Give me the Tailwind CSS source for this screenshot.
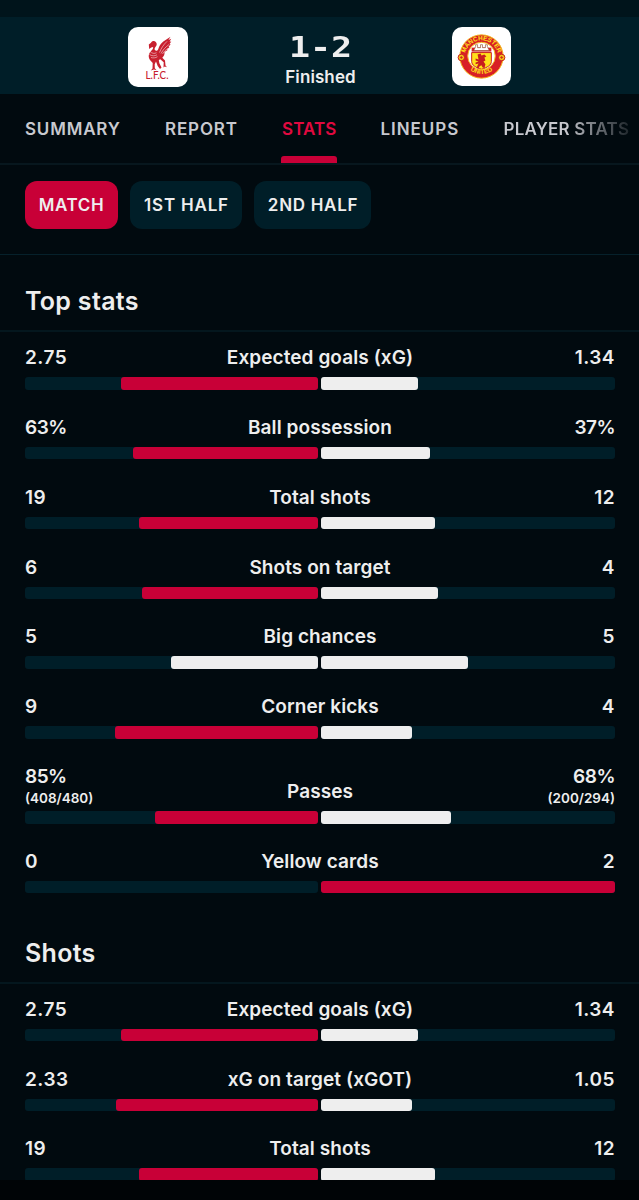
<!DOCTYPE html>
<html lang="en">
<head>
<meta charset="utf-8">
<title>Match stats</title>
<script src="https://cdn.jsdelivr.net/npm/@tailwindcss/browser@4"></script>
</head>
<body class="bg-[#010a0f] font-['Inter',sans-serif] text-[#eeeeee] h-[1200px] overflow-hidden">
<div class="flex h-[1180px] flex-col overflow-hidden">
  <div class="h-[17px] shrink-0 bg-[#00141b]"></div>
  <header class="grid h-[77px] shrink-0 grid-cols-[128px_60px_1fr_60px_127px] items-center bg-[#001e28] pt-[3px]">
    <span></span>
    <div class="-mt-px h-[60px] w-[60px] rounded-[10px] bg-white">
      <svg viewBox="0 0 60 60" class="h-[60px] w-[60px]" fill="#c8202f">
        <path d="M20.800 17.500l2.200-1.800c.8-1.700 3.300-2.200 4.800-.8 1.500 1.500 1 3.400-.2 4.800-1 1.300-1.500 2.600-.5 3.600 1 .9 2.500.3 3-.9 1.200-3.200 2.400-5.800 5.200-7.900l7.200-4.700-2 3.300 2.700-1.300-1.600 3 1.700-.4-1.900 2.900 1.300-.2-2.200 2.900 1 .1-2.500 2.500.6.3-3.100 2.200c.3 2.300-.6 4.300-2.200 5.700l2.700 2.800.5 4.800 1.500 1.800-2.200-.6-1.300 1 .2-5.400-3.400-3-1.500.8.600 3.200 2.100 4.300-1.500 1.600-2.300-3.200-1.700-4.500-1.300 2.800.1 4 1.800 2-2.600-.6-3.200 1 1.700-2.100.2-5.600-2.500-2.600c-2.300-3.300-1.700-6.700.9-9.200 1.200-1.200 2.200-2.300 2-4l-1.900.4-2 1.600z"/>
        <path d="M31.500 25.500c1.700-4 3.600-7.500 7.600-11.200M33 26.500c2-3.600 4-6 8-9M34.500 27c1.500-2.500 3-4 5.500-5.700M22 24.500c2 2 4.500 2.400 6.500 1.200M21.500 27.500c2.500 1.700 5 1.700 7.500.3M23 30.500c2 .7 4.500.5 6.500-.8" fill="none" stroke="#fff" stroke-width=".5"/>
        <text x="29" y="52" text-anchor="middle" font-family="Lato" font-size="12" font-weight="500" textLength="23" lengthAdjust="spacingAndGlyphs">L.F.C.</text>
      </svg>
    </div>
    <div class="flex flex-col items-center pl-px">
      <div class="mt-[6px] flex h-[32px] gap-[4.500px] font-['DejaVu_Sans_Mono',monospace] text-[28px] leading-[32px] font-bold"><span class="scale-x-125">1</span><span class="scale-x-125">-</span><span class="scale-x-125">2</span></div>
      <div class="mt-px text-[17px] leading-6 font-semibold tracking-[0.100px]">Finished</div>
    </div>
    <div class="-mt-px h-[59px] w-[59px] rounded-[10px] bg-white">
      <svg viewBox="0 0 60 60" class="h-[59px] w-[59px]">
        <defs><path id="arcT" d="M13.200 28a17 17 0 0 1 33.600 0"/><path id="arcB" d="M12 37a20.500 20.500 0 0 0 36 0"/></defs>
        <circle cx="30" cy="30" r="22" fill="#d81f26" stroke="#f5b818" stroke-width="1"/>
        <circle cx="30" cy="29.500" r="14" fill="#fff" stroke="#f5b818" stroke-width="1"/>
        <path d="M20 21h20v4H20z" fill="#d81f26"/><path d="M22 24l2-4v-2h2v3h3v-3h2v3h3v-3h2v2l2 4z" fill="#fff" stroke="#8a3b18" stroke-width=".6"/>
        <path d="M20 26h20v9c0 4-4 6-10 8-6-2-10-4-10-8z" fill="#ffe11a" stroke="#c81e1e"/>
        <path d="M26 28l3-1 1 2 3-1 2 2-2 1 1 3-2 1 2 3-1 4-2-1-1-2-2 1-1 2h-2l1-3 1-2-3 1v-2l3-1-3-1v-2l3 1z" fill="#c81e1e"/>
        <circle cx="9.500" cy="31" r="3.300" fill="#f5c518" stroke="#c81e1e"/><circle cx="50.500" cy="31" r="3.300" fill="#f5c518" stroke="#c81e1e"/>
        <path d="M8 31h3M9.500 29.500v3M49 31h3M50.500 29.500v3" stroke="#c81e1e" stroke-width=".8"/>
        <g font-family="Liberation Sans" font-weight="700" font-size="6.500" fill="#ffe11a"><text><textPath href="#arcT" startOffset="50%" text-anchor="middle" textLength="45">MANCHESTER</textPath></text><text><textPath href="#arcB" startOffset="50%" text-anchor="middle">UNITED</textPath></text></g>
      </svg>
    </div>
  </header>

  <nav class="flex h-[71px] shrink-0 items-stretch border-b-2 border-[#07171e] pl-[25px] text-[17px] leading-[70px] font-semibold whitespace-nowrap text-[#c8c9cf]">
    <div class="w-[140px] tracking-[0.800px]">SUMMARY</div>
    <div class="w-[116px] tracking-[0.850px]">REPORT</div>
    <div class="flex w-[99.500px] flex-col text-[#e0093f]"><span class="h-[62px] pl-px tracking-[0.100px]">STATS</span><span class="h-[7px] w-[56px] rounded-t-[3px] bg-[#c80037]"></span></div>
    <div class="w-[123px] tracking-[0.950px]">LINEUPS</div>
    <div class="bg-linear-to-r from-[#c8c9cf] from-50% to-[#20272c] bg-clip-text tracking-[0.200px] text-transparent">PLAYER STATS</div>
  </nav>

  <div class="flex h-[90px] shrink-0 gap-3 border-b border-[#06212b] pt-[16px] pl-[25px] text-[17px] leading-[48px] font-semibold">
    <div class="h-[48px] w-[93px] rounded-xl bg-[#c80037] text-center tracking-[0.600px]">MATCH</div>
    <div class="h-[48px] w-[112px] rounded-xl bg-[#001e28] pl-px text-center tracking-[0.800px]">1ST HALF</div>
    <div class="h-[48px] w-[117px] rounded-xl bg-[#001e28] pl-px text-center tracking-[0.700px]">2ND HALF</div>
  </div>

  <main id="stats"></main>
</div>
<div class="h-5 bg-[#000406]"></div>

<script>
const R = 'bg-[#c80037]', W = 'bg-[#eeeeee]';
// [label, home, away, home bar px, away bar px, home colour, away colour, home detail, away detail]
const xg = ['Expected goals (xG)', '2.75', '1.34', 197, 96.5, R, W];
const shots = ['Total shots', '19', '12', 179.5, 114, R, W];
const sections = [
  ['Top stats', [
    xg,
    ['Ball possession', '63%', '37%', 185, 109, R, W],
    shots,
    ['Shots on target', '6', '4', 176, 117, R, W],
    ['Big chances', '5', '5', 147, 147, W, W],
    ['Corner kicks', '9', '4', 203, 90.5, R, W],
    ['Passes', '85%', '68%', 163, 130, R, W, '(408/480)', '(200/294)'],
    ['Yellow cards', '0', '2', 0, 294, R, R],
  ]],
  ['Shots', [
    xg,
    ['xG on target (xGOT)', '2.33', '1.05', 202, 91, R, W],
    shots,
  ]],
];
const detail = t => t ? `<div class="h-[15px] text-[13.500px] leading-[19px] font-semibold tracking-normal">${t}</div>` : '';
const row = r => `
  <div class="${r[7] ? 'h-[84.850px]' : 'h-[69.850px]'} pr-[24px] pl-[25px]">
    <div class="grid grid-cols-[1fr_auto_1fr] items-end text-[19px] leading-6 font-semibold">
      <div class="${r[1].includes('%') ? 'tracking-[-0.500px]' : 'tracking-[0.500px]'}">${r[1]}${detail(r[7])}</div>
      <div class="tracking-[0.080px]">${r[0]}</div>
      <div class="text-right ${r[2].includes('%') ? 'tracking-[-0.500px]' : 'tracking-[0.500px]'}">${r[2]}${detail(r[8])}</div>
    </div>
    <div class="mt-[7px] flex h-[12.500px] gap-[3px]">
      <div class="flex w-[293px] justify-end rounded-[3px] bg-[#001e28]"><div class="rounded-[3px] ${r[5]}" style="width:${r[3]}px"></div></div>
      <div class="flex w-[294px] shrink-0 rounded-[3px] bg-[#001e28]"><div class="rounded-[3px] ${r[6]}" style="width:${r[4]}px"></div></div>
    </div>
  </div>`;
document.getElementById('stats').innerHTML = sections.map(([title, rows], i) => `
  <section>
    <h2 class="${i ? 'h-[64px] pt-[17px]' : 'h-[77px] pt-[30px]'} mb-[14px] border-b-2 border-[#04171e] pl-[25px] text-[25px] leading-8 font-semibold tracking-[0.300px]">${title}</h2>
    ${rows.map(row).join('')}
  </section>`).join('');
</script>
</body>
</html>
